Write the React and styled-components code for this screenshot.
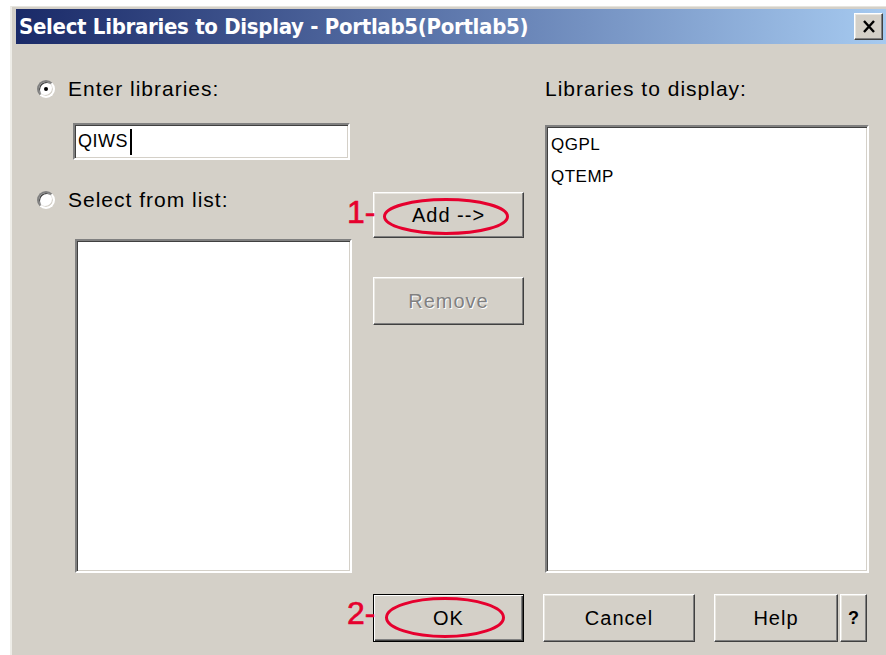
import React from "react";
import styled, { createGlobalStyle, css } from "styled-components";

const GlobalStyle = createGlobalStyle`
  html, body {
    margin: 0;
    padding: 0;
    background: #ffffff;
    overflow: hidden;
  }
  body {
    font-family: "Liberation Sans", Arial, sans-serif;
  }
`;

// classic 3D bevels
const sunken = css`
  box-sizing: border-box;
  background: #ffffff;
  border-style: solid;
  border-width: 2px;
  border-color: #808080 #ffffff #ffffff #808080;
  box-shadow: inset 1px 1px #404040, inset -1px -1px #d4d0c8;
`;

const raised = css`
  box-sizing: border-box;
  background: #d4d0c8;
  border-style: solid;
  border-width: 1px;
  border-color: #ffffff #404040 #404040 #ffffff;
  box-shadow: inset -1px -1px #808080, inset 1px 1px #e8e6e0;
`;

const Window = styled.div`
  margin: 6px 0 0 10px;
  width: 890px;
  height: 660px;
  box-sizing: border-box;
  background: #d4d0c8;
  border-top: 1px solid #e6e4de;
  border-left: 2px solid #eeede8;
  padding: 2px 0 0 4px;
  display: flex;
  flex-direction: column;
`;

const TitleBar = styled.div`
  width: 870px;
  height: 35px;
  box-sizing: border-box;
  padding: 0 3px 0 3px;
  display: flex;
  align-items: center;
  justify-content: space-between;
  background: linear-gradient(90deg, #1a2a68 0%, #5770a6 45%, #a6caf0 100%);
`;

const Title = styled.span`
  color: #ffffff;
  font-family: "DejaVu Sans Condensed", "DejaVu Sans", sans-serif;
  font-weight: bold;
  font-size: 22px;
  letter-spacing: -0.3px;
`;

const CloseButton = styled.div`
  ${raised};
  width: 29px;
  height: 27px;
  display: flex;
  align-items: center;
  justify-content: center;
`;

const Body = styled.div`
  position: relative;
  flex: 1;
  display: grid;
  grid-template-columns: 315px 151px 324px;
  grid-template-rows: 497px 48px;
  column-gap: 21px;
  row-gap: 21px;
  padding: 32px 0 0 21px;
`;

const Column = styled.div`
  display: flex;
  flex-direction: column;
  align-items: flex-start;
`;

const OptionRow = styled.div`
  height: 26px;
  display: flex;
  align-items: center;
  gap: 13px;
  margin-top: ${(p) => p.$top || 0}px;
`;

const Radio = styled.span`
  position: relative;
  width: 18px;
  height: 18px;
  box-sizing: border-box;
  border-radius: 50%;
  background: #ffffff;
  border: 2px solid;
  border-color: #808080 #ffffff #ffffff #808080;
  box-shadow: inset 1px 1px #404040, inset -1px -1px #d4d0c8;

  ${(p) =>
    p.$checked &&
    css`
      &::after {
        content: "";
        position: absolute;
        left: 5px;
        top: 5px;
        width: 4px;
        height: 4px;
        border-radius: 50%;
        background: #000000;
      }
    `}
`;

const Label = styled.span`
  font-size: 21px;
  letter-spacing: 1px;
  color: #000000;
`;

const TextField = styled.div`
  ${sunken};
  margin: 21px 0 0 36px;
  width: 277px;
  height: 37px;
  padding: 0 3px;
  display: flex;
  align-items: center;
  font-size: 18px;
  letter-spacing: 0.5px;
`;

const Caret = styled.span`
  width: 2px;
  height: 26px;
  margin-left: 2px;
  background: #000000;
`;

const ListBox = styled.div`
  ${sunken};
  margin: ${(p) => p.$top}px 0 0 ${(p) => p.$left || 0}px;
  width: ${(p) => p.$width}px;
  flex: 1;
  padding: 2px 4px;
`;

const ListItem = styled.div`
  font-size: 17px;
  line-height: 32px;
  letter-spacing: 0.5px;
  color: #000000;
`;

const Button = styled.div`
  ${raised};
  width: ${(p) => p.$width || 151}px;
  height: ${(p) => p.$height || 46}px;
  margin-top: ${(p) => p.$top || 0}px;
  margin-left: ${(p) => p.$left || 0}px;
  flex-shrink: 0;
  display: flex;
  align-items: center;
  justify-content: center;
  font-size: 20px;
  letter-spacing: 1px;
  color: #000000;

  ${(p) =>
    p.$default &&
    css`
      border: 1px solid #000000;
      box-shadow: inset 1px 1px #ffffff, inset -1px -1px #404040,
        inset -2px -2px #808080;
    `}

  ${(p) =>
    p.$disabled &&
    css`
      color: #808080;
      text-shadow: 1px 1px #ffffff;
    `}
`;

const HelpMark = styled(Button)`
  font-weight: bold;
  font-size: 18px;
  letter-spacing: 0;
`;

const ButtonRow = styled.div`
  display: flex;
  align-items: stretch;
`;

// red call-outs drawn on top of the dialog
const Marker = styled.span`
  position: absolute;
  left: ${(p) => p.$x}px;
  top: ${(p) => p.$y}px;
  font-size: 32px;
  line-height: 32px;
  color: #e6002e;
  -webkit-text-stroke: 0.6px #e6002e;
  pointer-events: none;
`;

const Ring = styled.svg`
  position: absolute;
  left: ${(p) => p.$x}px;
  top: ${(p) => p.$y}px;
  overflow: visible;
  pointer-events: none;
`;

const Callout = ({ n, x, y, ringX, ringY, w, h }) => (
  <>
    <Marker $x={x} $y={y}>
      {n}-
    </Marker>
    <Ring $x={ringX} $y={ringY} width={w} height={h}>
      <ellipse
        cx={w / 2}
        cy={h / 2}
        rx={w / 2 - 1.5}
        ry={h / 2 - 1.5}
        fill="none"
        stroke="#e6002e"
        strokeWidth="3"
      />
    </Ring>
  </>
);

const SelectLibrariesDialog = () => {
  const displayed = ["QGPL", "QTEMP"];

  return (
    <Window>
      <TitleBar>
        <Title>Select Libraries to Display - Portlab5(Portlab5)</Title>
        <CloseButton>
          <svg width="14" height="13" viewBox="0 0 14 13">
            <path d="M2 1 L12 12 M12 1 L2 12" stroke="#000" strokeWidth="2.4" />
          </svg>
        </CloseButton>
      </TitleBar>

      <Body>
        <Column>
          <OptionRow>
            <Radio $checked />
            <Label>Enter libraries:</Label>
          </OptionRow>
          <TextField>
            QIWS
            <Caret />
          </TextField>
          <OptionRow $top={27}>
            <Radio />
            <Label>Select from list:</Label>
          </OptionRow>
          <ListBox $top={26} $left={38} $width={277} />
        </Column>

        <Column>
          <Button $top={116}>Add --&gt;</Button>
          <Button $top={39} $height={48} $disabled>
            Remove
          </Button>
        </Column>

        <Column>
          <OptionRow>
            <Label>Libraries to display:</Label>
          </OptionRow>
          <ListBox $top={23} $width={324}>
            {displayed.map((lib) => (
              <ListItem key={lib}>{lib}</ListItem>
            ))}
          </ListBox>
        </Column>

        <div />
        <ButtonRow>
          <Button $default $height={48}>
            OK
          </Button>
        </ButtonRow>
        <ButtonRow>
          <Button $width={152} $height={48} $left={-2}>
            Cancel
          </Button>
          <Button $width={124} $height={48} $left={19}>
            Help
          </Button>
          <HelpMark $width={27} $height={48} $left={2}>
            ?
          </HelpMark>
        </ButtonRow>

        <Callout n={1} x={331} y={152} ringX={367} ringY={154} w={126} h={37} />
        <Callout n={2} x={331} y={553} ringX={369} ringY={553} w={120} h={41} />
      </Body>
    </Window>
  );
};

export default function App() {
  return (
    <>
      <GlobalStyle />
      <SelectLibrariesDialog />
    </>
  );
}
